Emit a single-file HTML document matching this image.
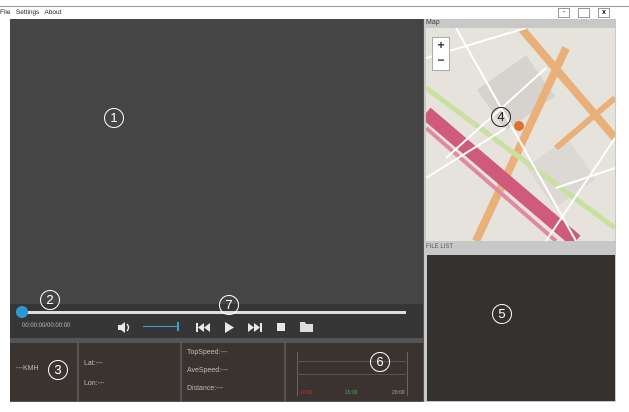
<!DOCTYPE html>
<html><head><style>
body{margin:0;width:629px;height:412px;background:#fff;position:relative;overflow:hidden;font-family:"Liberation Sans",sans-serif}
.a{position:absolute}
.c{position:absolute;border:1px solid #fff;border-radius:50%;color:#fff;text-align:center;font-size:13px;box-sizing:border-box}
.t{color:#bbb;font-size:7px;position:absolute}
</style></head><body>
<div class="a" style="left:0;top:6px;width:629px;height:1px;background:#999"></div>
<div class="a" style="left:0;top:9px;font-size:6.5px;color:#222">File&nbsp;&nbsp; Settings&nbsp;&nbsp; About</div>
<div class="a" style="left:558px;top:8px;width:12px;height:10px;border:1px solid #999;box-sizing:border-box;font-size:7px;text-align:center;line-height:8px">-</div>
<div class="a" style="left:578px;top:8px;width:12px;height:10px;border:1px solid #999;box-sizing:border-box"></div>
<div class="a" style="left:598px;top:8px;width:12px;height:10px;border:1px solid #999;box-sizing:border-box;font-size:7px;text-align:center;line-height:8px;font-weight:bold">x</div>
<div class="a" style="left:10px;top:19px;width:414px;height:383px;background:#555"></div>
<div class="a" style="left:10px;top:19px;width:413px;height:285px;background:#454545"></div>
<div class="a" style="left:10px;top:304px;width:413px;height:34px;background:#363636"></div>
<div class="a" style="left:20px;top:311px;width:386px;height:3px;background:#ddd"></div>
<div class="a" style="left:16px;top:306px;width:12px;height:12px;border-radius:50%;background:#2a9ad6"></div>
<div class="t" style="left:22px;top:323px;font-size:6px">00:00:00/00:00:00</div>
<svg class="a" style="left:116px;top:321px" width="170" height="13" viewBox="0 0 170 13">
<g fill="#e8e8e8">
<path d="M2 4h3l4-3v11l-4-3H2z"/><path d="M11 3q3 3.5 0 7" stroke="#e8e8e8" fill="none" stroke-width="1.4"/>
<rect x="80" y="2" width="2" height="9"/><path d="M88 2v9l-6-4.5zM94 2v9l-6-4.5z"/>
<path d="M109 1l9 5.5-9 5.5z"/>
<path d="M132 2v9l6-4.5zM138 2v9l6-4.5z"/><rect x="144" y="2" width="2" height="9"/>
<rect x="161" y="2" width="8" height="8"/>
</g></svg>
<div class="a" style="left:143px;top:326px;width:35px;height:1px;background:#3aa0d8"></div>
<div class="a" style="left:177px;top:322px;width:2px;height:9px;background:#3aa0d8"></div>
<svg class="a" style="left:300px;top:321px" width="14" height="11"><path d="M0 1h5l1 2h7v8H0z" fill="#ddd"/></svg>
<div class="a" style="left:10px;top:343px;width:67px;height:58px;background:#3b3330"></div>
<div class="a" style="left:79px;top:343px;width:101px;height:58px;background:#3b3330"></div>
<div class="a" style="left:182px;top:343px;width:102px;height:58px;background:#3b3330"></div>
<div class="a" style="left:286px;top:343px;width:137px;height:58px;background:#3b3330"></div>
<div class="t" style="left:16px;top:365px">---KMH</div>
<div class="t" style="left:84px;top:360px">Lat:---</div>
<div class="t" style="left:84px;top:380px">Lon:---</div>
<div class="t" style="left:187px;top:349px">TopSpeed:---</div>
<div class="t" style="left:187px;top:367px">AveSpeed:---</div>
<div class="t" style="left:187px;top:385px">Distance:---</div>
<div class="a" style="left:297px;top:352px;width:109px;height:44px;border-left:1px solid #666;border-right:1px solid #666"></div>
<div class="a" style="left:297px;top:361px;width:109px;height:1px;background:#555"></div>
<div class="a" style="left:297px;top:374px;width:109px;height:1px;background:#555"></div>
<div class="a" style="left:300px;top:390px;font-size:5px;color:#c33">10:00</div>
<div class="a" style="left:345px;top:390px;font-size:5px;color:#5a5">15:00</div>
<div class="a" style="left:392px;top:390px;font-size:5px;color:#aaa">20:00</div>
<div class="c" style="left:104px;top:108px;width:20px;height:20px;line-height:18px">1</div>
<div class="c" style="left:40px;top:290px;width:20px;height:20px;line-height:18px">2</div>
<div class="c" style="left:48px;top:360px;width:20px;height:20px;line-height:18px">3</div>
<div class="c" style="left:219px;top:295px;width:20px;height:20px;line-height:18px">7</div>
<div class="c" style="left:370px;top:352px;width:20px;height:20px;line-height:18px">6</div>
<div class="a" style="left:424px;top:19px;width:192px;height:383px;background:#c8c8c8"></div>
<div class="a" style="left:426px;top:19px;font-size:7px;color:#444">Map</div>
<svg class="a" style="left:426px;top:28px" width="189" height="213" viewBox="0 0 189 213">
<rect width="189" height="213" fill="#e6e2dc"/>
<rect x="60" y="40" width="60" height="50" fill="#d6d3cf" transform="rotate(-35 90 65)"/>
<rect x="110" y="120" width="50" height="50" fill="#dcd9d5" transform="rotate(-35 135 145)"/>
<path d="M140 20 L50 213" stroke="#eab07a" stroke-width="8"/>
<path d="M95 0 L189 110" stroke="#eab07a" stroke-width="8"/>
<path d="M189 70 L130 120" stroke="#eab07a" stroke-width="6"/>
<path d="M0 60 L189 200" stroke="#c9e0a0" stroke-width="5"/>
<path d="M0 85 L150 213" stroke="#cf5a7a" stroke-width="14"/>
<path d="M0 100 L130 213" stroke="#e08aa2" stroke-width="4"/>
<path d="M30 0 L150 213 M0 30 L100 0 M120 213 L189 110 M0 150 L80 100 M20 130 L120 40 M130 160 L189 140" stroke="#fff" stroke-width="2" fill="none"/>
<circle cx="93" cy="98" r="5" fill="#e07030"/>
</svg>
<div class="a" style="left:432px;top:37px;width:16px;height:32px;background:#fff;border:1px solid #aaa;font-size:12px;text-align:center;line-height:15px;font-weight:bold;color:#333">+<br>−</div>
<div class="a" style="left:491px;top:107px;width:20px;height:20px;border:1px solid #222;border-radius:50%;text-align:center;font-size:13px;line-height:18px;color:#222;box-sizing:border-box">4</div>
<div class="a" style="left:426px;top:244px;font-size:6px;color:#555">FILE LIST</div>
<div class="a" style="left:427px;top:255px;width:188px;height:146px;background:#34312e"></div>
<div class="c" style="left:492px;top:304px;width:20px;height:20px;line-height:18px">5</div>
</body></html>
